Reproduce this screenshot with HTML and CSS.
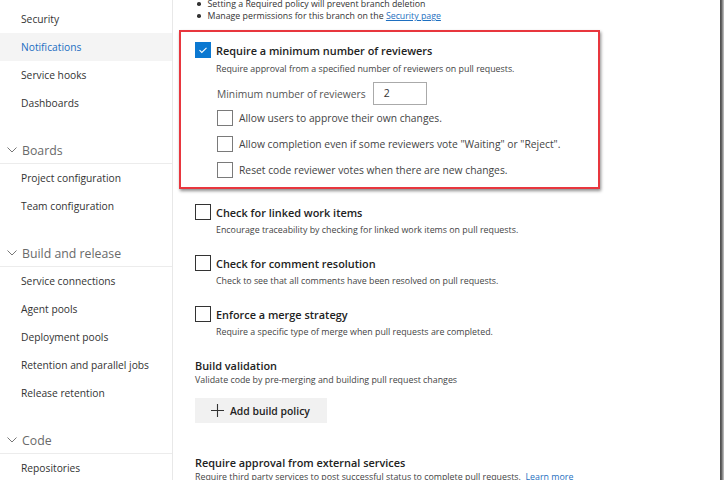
FILE: index.html
```html
<!DOCTYPE html>
<html lang="en">
<head>
<meta charset="utf-8">
<title>Branch policies</title>
<link rel="stylesheet" href="styles.css">
</head>
<body>
<div class="page">
  <nav class="sidebar">
    <div class="nav-item">Security</div>
    <div class="nav-item selected">Notifications</div>
    <div class="nav-item">Service hooks</div>
    <div class="nav-item">Dashboards</div>

    <div class="nav-section">
      <div class="nav-header"><svg class="chev" width="10" height="6" viewBox="0 0 10 6"><path d="M0.5 0.5 L5 5 L9.5 0.5" fill="none" stroke="#777" stroke-width="1"/></svg><span>Boards</span></div>
      <div class="nav-item">Project configuration</div>
      <div class="nav-item">Team configuration</div>
    </div>

    <div class="nav-section">
      <div class="nav-header"><svg class="chev" width="10" height="6" viewBox="0 0 10 6"><path d="M0.5 0.5 L5 5 L9.5 0.5" fill="none" stroke="#777" stroke-width="1"/></svg><span>Build and release</span></div>
      <div class="nav-item">Service connections</div>
      <div class="nav-item">Agent pools</div>
      <div class="nav-item">Deployment pools</div>
      <div class="nav-item">Retention and parallel jobs</div>
      <div class="nav-item">Release retention</div>
    </div>

    <div class="nav-section">
      <div class="nav-header"><svg class="chev" width="10" height="6" viewBox="0 0 10 6"><path d="M0.5 0.5 L5 5 L9.5 0.5" fill="none" stroke="#777" stroke-width="1"/></svg><span>Code</span></div>
      <div class="nav-item">Repositories</div>
    </div>
  </nav>

  <main class="content">
    <ul class="notes">
      <li><span class="dot"></span>Setting a Required policy will prevent branch deletion</li>
      <li><span class="dot"></span>Manage permissions for this branch on the&nbsp;<a class="link" href="#">Security page</a></li>
    </ul>

    <section class="policy highlight">
      <div class="policy-head">
        <span class="check checked"><svg width="16" height="16" viewBox="0 0 16 16"><path d="M4.5 8.2 L6.8 10.5 L11.5 5.8" fill="none" stroke="#fff" stroke-width="1.1"/></svg></span>
        <span class="policy-title">Require a minimum number of reviewers</span>
      </div>
      <div class="policy-desc">Require approval from a specified number of reviewers on pull requests.</div>
      <div class="policy-body">
        <div class="min-row">
          <span class="min-label">Minimum number of reviewers</span>
          <span class="num-input">2</span>
        </div>
        <div class="sub-row"><span class="check small"></span><span>Allow users to approve their own changes.</span></div>
        <div class="sub-row"><span class="check small"></span><span>Allow completion even if some reviewers vote "Waiting" or "Reject".</span></div>
        <div class="sub-row"><span class="check small"></span><span>Reset code reviewer votes when there are new changes.</span></div>
      </div>
    </section>

    <section class="policy plain first">
      <div class="policy-head">
        <span class="check"></span>
        <span class="policy-title">Check for linked work items</span>
      </div>
      <div class="policy-desc">Encourage traceability by checking for linked work items on pull requests.</div>
    </section>

    <section class="policy plain">
      <div class="policy-head">
        <span class="check"></span>
        <span class="policy-title">Check for comment resolution</span>
      </div>
      <div class="policy-desc">Check to see that all comments have been resolved on pull requests.</div>
    </section>

    <section class="policy plain">
      <div class="policy-head">
        <span class="check"></span>
        <span class="policy-title">Enforce a merge strategy</span>
      </div>
      <div class="policy-desc">Require a specific type of merge when pull requests are completed.</div>
    </section>

    <section class="group build">
      <div class="group-title">Build validation</div>
      <div class="group-desc">Validate code by pre-merging and building pull request changes</div>
      <button class="add-btn"><svg width="13" height="13" viewBox="0 0 13 13"><path d="M6.5 0 V13 M0 6.5 H13" stroke="#333" stroke-width="1.1" fill="none"/></svg><span>Add build policy</span></button>
    </section>

    <section class="group external">
      <div class="group-title">Require approval from external services</div>
      <div class="group-desc">Require third party services to post successful status to complete pull requests.&nbsp; <a class="plain-link" href="#">Learn more</a></div>
    </section>
  </main>

  <div class="edge"></div>
</div>
</body>
</html>
```

FILE: styles.css
```css
* { box-sizing: border-box; }

html, body {
  margin: 0;
  padding: 0;
  background: #fff;
}

body {
  font-family: "Open Sans", "Noto Sans", "Liberation Sans", sans-serif;
  color: #222;
}

.page {
  display: flex;
  width: 724px;
  height: 480px;
  overflow: hidden;
}

/* ---------- sidebar ---------- */
.sidebar {
  width: 173px;
  flex: none;
  border-right: 1px solid #e8e8e8;
  padding-top: 5px;
  background: #fff;
}

.nav-item {
  height: 28px;
  line-height: 28px;
  padding-left: 21px;
  font-size: 10.25px;
  color: #333;
  white-space: nowrap;
}

.nav-item.selected {
  background: #f4f4f4;
  color: #1b6ec2;
}

.nav-section {
  margin-top: 20px;
}

.nav-header {
  display: flex;
  align-items: center;
  height: 27px;
  border-bottom: 1px solid #ececec;
  padding-left: 7px;
  font-size: 12.3px;
  color: #6a6a6a;
}

.nav-header .chev {
  margin-right: 5px;
  margin-top: -1px;
}

/* ---------- content ---------- */
.content {
  flex: 1;
  min-width: 0;
  padding-left: 22px;
  background: #fff;
}

.notes {
  list-style: none;
  margin: -2px 0 0 0;
  padding: 0;
  font-size: 8.8px;
  line-height: 12px;
  color: #333;
}

.notes li {
  display: flex;
  align-items: center;
  white-space: nowrap;
}

.dot {
  width: 3.5px;
  height: 3.5px;
  border-radius: 50%;
  background: #333;
  margin: 0 7px 0 2px;
  flex: none;
}

.link {
  color: #1e6fc0;
  text-decoration: underline;
}

.plain-link {
  color: #1e6fc0;
  text-decoration: none;
}

.policy-head {
  display: flex;
  align-items: center;
  height: 16px;
}

.check {
  width: 16px;
  height: 16px;
  flex: none;
  border: 1.3px solid #333;
  background: #fff;
  margin-right: 5px;
  display: inline-flex;
}

.check.checked {
  background: #0b78d1;
  border: none;
}

.check.small {
  border: 1px solid #7a7a7a;
  margin-right: 6px;
}

.policy-title {
  font-size: 10.9px;
  font-weight: 600;
  color: #222;
  white-space: nowrap;
}

.policy-desc {
  margin-top: 4px;
  padding-left: 21px;
  font-size: 8.85px;
  line-height: 14px;
  color: #444;
  white-space: nowrap;
}

.highlight {
  margin-top: 8px;
  margin-left: -16px;
  width: 421px;
  border: 2px solid #e8363e;
  box-shadow: 1px 2px 3px rgba(0, 0, 0, 0.45);
  padding: 10px 0 4px 14px;
}

.policy-body {
  padding-left: 22px;
}

.min-row {
  display: flex;
  align-items: center;
  margin-top: 6px;
  height: 23px;
}

.min-label {
  font-size: 10.3px;
  color: #555;
  margin-right: 7px;
}

.num-input {
  width: 54px;
  height: 23px;
  border: 1px solid #aaa;
  padding-left: 10px;
  font-size: 10.5px;
  line-height: 21px;
  color: #333;
}

.sub-row {
  display: flex;
  align-items: center;
  height: 26px;
  font-size: 10.3px;
  color: #444;
  white-space: nowrap;
}

.policy.plain {
  margin-top: 18px;
}

.policy.plain.first {
  margin-top: 15px;
}

.policy.plain .policy-desc {
  margin-top: 3px;
}

.group-title {
  font-size: 10.9px;
  font-weight: 600;
  line-height: 16px;
  color: #222;
  white-space: nowrap;
}

.group-desc {
  font-size: 8.85px;
  line-height: 12px;
  color: #444;
  white-space: nowrap;
}

.build {
  margin-top: 19px;
}

.external {
  margin-top: 32px;
}

.add-btn {
  margin-top: 12px;
  display: flex;
  align-items: center;
  width: 132px;
  height: 25px;
  border: none;
  background: #f1f1f1;
  padding: 0 0 0 16px;
  font-family: inherit;
  font-size: 10.4px;
  font-weight: 600;
  color: #222;
}

.add-btn svg {
  margin-right: 6px;
}

.edge {
  width: 4px;
  flex: none;
  background: linear-gradient(to right, #4c4c4c 0, #5e5e5e 35%, #9a9a9a 70%, #c8c8c8 100%);
}
```
